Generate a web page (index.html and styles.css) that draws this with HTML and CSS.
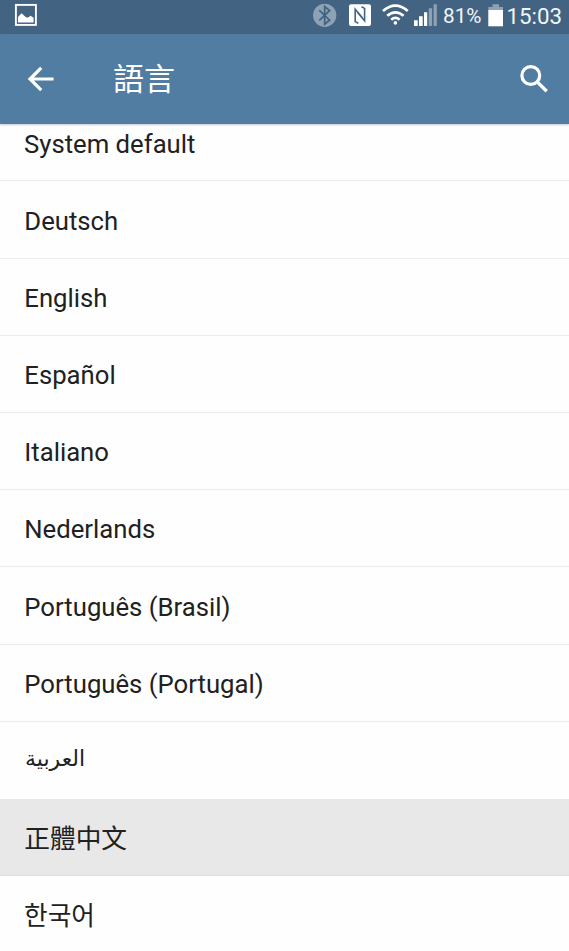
FILE: index.html
```html
<!DOCTYPE html>
<html lang="zh-Hant">
<head>
<meta charset="utf-8">
<title>語言</title>
<link rel="stylesheet" href="styles.css">
</head>
<body>
<div class="screen">
  <div class="status">
    <svg class="status-icons" width="569" height="35" viewBox="0 0 569 35" aria-hidden="true">
      <rect x="15.9" y="4.9" width="20" height="20" fill="none" stroke="#fff" stroke-width="1.9"/>
      <path d="M18 22.5V17l3.6-3.7 3.8 3.4 2.2 1 3-2 3 2v4.8z" fill="#fff"/>
      <circle cx="324.7" cy="15.3" r="11.6" fill="#8ea2b5"/>
      <path d="M319.3 10.3l10.3 9.8-4.9 4V6.6l4.9 4-10.3 9.8" fill="none" stroke="#436382" stroke-width="1.8"/>
      <rect x="349" y="4.3" width="22" height="21.7" rx="2" fill="#fff"/>
      <path d="M358.3 23.2l-3.1-1.6V9.2l7 8.4M361.5 6.8l3.1 1.6v12.4l-7-8.4" fill="none" stroke="#436382" stroke-width="1.6"/>
      <path d="M383 11q12.4-10.8 24.8 0M387.2 15.8q8.2-7 16.4 0M391.2 19.8q4.2-3.7 8.4 0" fill="none" stroke="#fff" stroke-width="2.7"/>
      <circle cx="395.4" cy="22.9" r="1.8" fill="#fff"/>
      <path d="M414 20.3h3.7V26H414zM419 16.3h3.7V26H419zM424 12.3h3.2V26H424z" fill="#fff"/>
      <path d="M428.7 8.3h3.4V26h-3.4zM433.6 4.2h3.2V26h-3.2z" fill="#8ea2b5"/>
      <path d="M488.3 7h4.2V4.3h6.5V7h4v3.2h-14.7z" fill="#8ea2b5"/>
      <rect x="488.3" y="10" width="14.7" height="16.3" fill="#fff"/>
    </svg>
    <span class="battery">81%</span>
    <span class="clock">15:03</span>
  </div>
  <header class="bar">
    <svg class="back" width="30" height="30" viewBox="0 0 30 30" aria-hidden="true"><path d="M27.6 15H4M15.2 3.8L4 15l11.2 11.2" fill="none" stroke="#fff" stroke-width="3.2"/></svg>
    <h1 class="title">語言</h1>
    <svg class="search" width="32" height="32" viewBox="0 0 32 32" aria-hidden="true"><circle cx="11.8" cy="12.5" r="8.9" fill="none" stroke="#fff" stroke-width="3.2"/><path d="M17.7 18.4l10 9.9" stroke="#fff" stroke-width="3.4"/></svg>
  </header>
  <ul class="list">
    <li class="row first"><span>System default</span></li>
    <li class="row"><span>Deutsch</span></li>
    <li class="row"><span>English</span></li>
    <li class="row"><span>Español</span></li>
    <li class="row"><span>Italiano</span></li>
    <li class="row"><span>Nederlands</span></li>
    <li class="row"><span>Português (Brasil)</span></li>
    <li class="row"><span>Português (Portugal)</span></li>
    <li class="row arabic"><span lang="ar">العربية</span></li>
    <li class="row selected"><span>正體中文</span></li>
    <li class="row korean"><span lang="ko">한국어</span></li>
  </ul>
</div>
</body>
</html>
```
FILE: styles.css
```css
* { box-sizing: border-box; }
body { margin: 0; background: #fefefe; }
.screen {
  width: 569px; height: 951px; overflow: hidden;
  display: flex; flex-direction: column;
  font-family: Roboto, "Noto Sans CJK TC", sans-serif;
  color: #212121;
}
.status {
  position: relative; flex: none; height: 34px;
  display: flex; justify-content: flex-end; align-items: flex-start;
  padding-right: 7px; background: #436382; color: #fff;
}
.status-icons { position: absolute; left: 0; top: 0; }
.battery { font-size: 20.7px; line-height: 32px; margin-right: 25px; color: #f2f5f8; }
.clock { font-size: 22.3px; line-height: 32px; color: #f2f5f8; }
.bar {
  position: relative; z-index: 1; flex: none; height: 90px;
  display: flex; align-items: center; padding: 0 18px 0 26px;
  background: #517da2; color: #fff;
  box-shadow: 0 1px 2px rgba(0, 0, 0, .22);
}
.title { margin: 0 0 0 57px; padding-bottom: 4px; flex: 1; font-size: 31px; font-weight: 400; line-height: 44px; font-family: "Noto Sans CJK TC", sans-serif; }
.list { margin: 0; padding: 0; list-style: none; flex: 1; }
.row {
  height: 77.2px; padding: 2.5px 0 0 24.3px;
  display: flex; align-items: center;
  border-bottom: 1px solid #ececec;
  font-size: 25.7px; line-height: 36px; white-space: nowrap;
}
.first { height: 57.4px; padding: 0 0 17px 24px; }
.arabic { padding: 0 0 3px 25px; border-bottom: 0; font-family: "DejaVu Sans", sans-serif; font-size: 22px; }
.selected { padding-top: 5px; background: #e8e8e8; border-bottom-color: #dfdfdf; }
.korean { padding: 0 0 2px 24px; font-family: "Noto Sans CJK KR", sans-serif; border-bottom: 0; }
```
